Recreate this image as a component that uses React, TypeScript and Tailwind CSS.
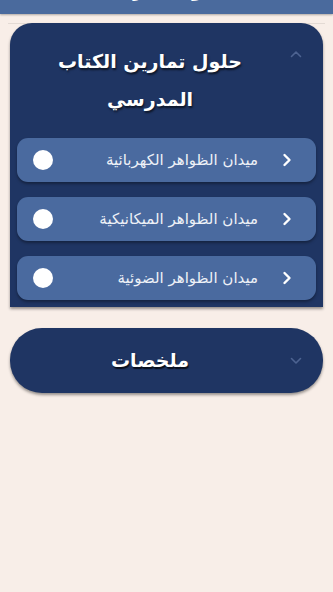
import React from "react";

const arabic = { fontFamily: '"DejaVu Sans", "Noto Sans", sans-serif' };

function ChevronRight() {
  return (
    <svg width="10" height="14" viewBox="0 0 10 14" fill="none">
      <path d="M2.5 2 L7.5 7 L2.5 12" stroke="white" strokeWidth="2.4" strokeLinecap="round" strokeLinejoin="round" />
    </svg>
  );
}

function Item({ label }: { label: string }) {
  return (
    <div className="flex h-[44px] items-center rounded-[11px] bg-[#4a6a9f] shadow-[0_2px_3px_rgba(0,0,0,0.35)]">
      <div className="ml-[16px] h-[20px] w-[20px] rounded-full bg-white" />
      <div dir="rtl" className="flex-1 text-right text-[15px] leading-none text-[#eef1f7]" style={arabic}>
        {label}
      </div>
      <div className="ml-[24px] mr-[24px] flex items-center">
        <ChevronRight />
      </div>
    </div>
  );
}

export default function App() {
  return (
    <div className="min-h-[592px] w-[333px] bg-[#f8eee8]" style={arabic}>
      <div className="h-[14px] overflow-hidden bg-[#4a6a9d] shadow-[0_1px_2px_rgba(0,0,0,0.3)]">
        <div dir="rtl" className="-mt-[19px] text-center text-[16px] font-bold leading-[22px] text-white">
          حلول الفيزياء
        </div>
      </div>
      <div className="h-[9px]" />
      <div className="mx-[8px] h-px bg-[#e3dad4]" />
      <div className="-mt-px px-[10px]">
        <div className="rounded-t-[22px] bg-[#1f3563] px-[7px] pb-[7px] pt-[19px] shadow-[0_2px_3px_rgba(0,0,0,0.4)]">
          <div className="flex items-start">
            <div
              dir="rtl"
              className="flex-1 text-center text-[19px] font-bold leading-[38px] text-white [text-shadow:1px_2px_2px_rgba(0,0,0,0.6)]"
            >
              حلول تمارين الكتاب
              <br />
              المدرسي
            </div>
            <div className="flex w-[33px] justify-start pl-[7px] pt-[8px]">
              <svg width="12" height="8" viewBox="0 0 12 8" fill="none">
                <path d="M1.5 6.5 L6 2 L10.5 6.5" stroke="#4d6391" strokeWidth="1.6" strokeLinecap="round" strokeLinejoin="round" />
              </svg>
            </div>
          </div>
          <div className="mt-[20px] flex flex-col gap-[15px]">
            <Item label="ميدان الظواهر الكهربائية" />
            <Item label="ميدان الظواهر الميكانيكية" />
            <Item label="ميدان الظواهر الضوئية" />
          </div>
        </div>
        <div className="mt-[21px] flex h-[65px] items-center rounded-[32px] bg-[#1f3563] shadow-[0_2px_3px_rgba(0,0,0,0.4)]">
          <div
            dir="rtl"
            className="flex-1 pl-[7px] text-center text-[19px] font-bold text-white [text-shadow:1px_2px_1px_rgba(0,0,0,0.7)]"
          >
            ملخصات
          </div>
          <div className="flex w-[40px] justify-start pl-[7px]">
            <svg width="12" height="8" viewBox="0 0 12 8" fill="none">
              <path d="M1.5 1.5 L6 6 L10.5 1.5" stroke="#4d6391" strokeWidth="1.6" strokeLinecap="round" strokeLinejoin="round" />
            </svg>
          </div>
        </div>
      </div>
    </div>
  );
}
